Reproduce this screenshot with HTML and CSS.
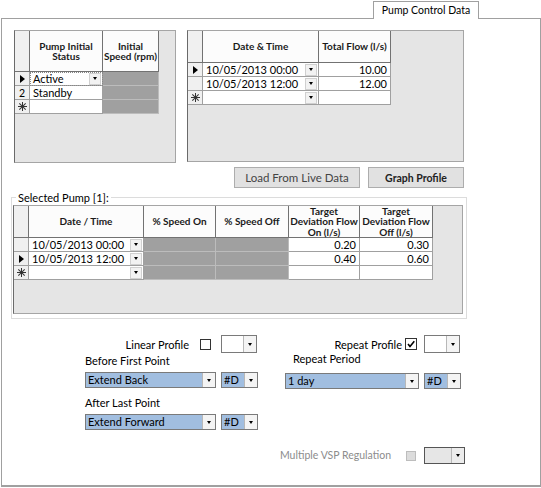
FILE: index.html
```html
<!DOCTYPE html>
<html>
<head>
<meta charset="utf-8">
<link rel="stylesheet" href="styles.css">
</head>
<body>
<div class="tabstrip"><div class="tab">Pump Control Data</div></div>
<div class="panel">
  <div class="toprow">
    <div class="dgv dgv1">
      <div class="tbl t1">
        <div class="hc rh"></div>
        <div class="hc">Pump Initial<br>Status</div>
        <div class="hc">Initial<br>Speed (rpm)</div>

        <div class="rc"><span class="cur"></span></div>
        <div class="c dd cur-cell"><span class="txt">Active</span><span class="dbtn small"><i></i></span></div>
        <div class="c dis"></div>

        <div class="rc num">2</div>
        <div class="c"><span class="txt">Standby</span></div>
        <div class="c dis"></div>

        <div class="rc"><span class="star"></span></div>
        <div class="c"></div>
        <div class="c dis"></div>
      </div>
    </div>
    <div class="dgv dgv2">
      <div class="tbl t2">
        <div class="hc rh"></div>
        <div class="hc">Date &amp; Time</div>
        <div class="hc">Total Flow (l/s)</div>

        <div class="rc"><span class="cur"></span></div>
        <div class="c dd"><span class="txt">10/05/2013 00:00</span><span class="dbtn"><i></i></span></div>
        <div class="c num-r">10.00</div>

        <div class="rc"></div>
        <div class="c dd"><span class="txt">10/05/2013 12:00</span><span class="dbtn"><i></i></span></div>
        <div class="c num-r">12.00</div>

        <div class="rc"><span class="star"></span></div>
        <div class="c dd"><span class="txt"></span><span class="dbtn"><i></i></span></div>
        <div class="c"></div>
      </div>
    </div>
  </div>

  <div class="btnrow">
    <button class="btn btn-load">Load From Live Data</button>
    <button class="btn btn-graph">Graph Profile</button>
  </div>

  <fieldset class="group">
    <legend>Selected Pump [1]:</legend>
    <div class="dgv dgv3">
      <div class="tbl t3">
        <div class="hc rh"></div>
        <div class="hc">Date / Time</div>
        <div class="hc">% Speed On</div>
        <div class="hc">% Speed Off</div>
        <div class="hc">Target<br>Deviation Flow<br>On (l/s)</div>
        <div class="hc">Target<br>Deviation Flow<br>Off (l/s)</div>

        <div class="rc"></div>
        <div class="c dd"><span class="txt">10/05/2013 00:00</span><span class="dbtn"><i></i></span></div>
        <div class="c dis"></div>
        <div class="c dis"></div>
        <div class="c num-r">0.20</div>
        <div class="c num-r">0.30</div>

        <div class="rc"><span class="cur"></span></div>
        <div class="c dd"><span class="txt">10/05/2013 12:00</span><span class="dbtn"><i></i></span></div>
        <div class="c dis"></div>
        <div class="c dis"></div>
        <div class="c num-r">0.40</div>
        <div class="c num-r">0.60</div>

        <div class="rc"><span class="star"></span></div>
        <div class="c dd"><span class="txt"></span><span class="dbtn"><i></i></span></div>
        <div class="c dis"></div>
        <div class="c dis"></div>
        <div class="c"></div>
        <div class="c"></div>
      </div>
    </div>
  </fieldset>

  <div class="opts">
    <div class="col col-left">
      <div class="line1">
        <span class="lbl">Linear Profile</span>
        <span class="chk chk-l"></span>
        <span class="combo small-combo"><span class="ctext"></span><span class="cbtn"><i></i></span></span>
      </div>
      <div class="cap cap1">Before First Point</div>
      <div class="comborow">
        <span class="combo blue wide"><span class="ctext">Extend Back</span><span class="cbtn"><i></i></span></span>
        <span class="combo blue narrow"><span class="ctext">#D</span><span class="cbtn"><i></i></span></span>
      </div>
      <div class="cap cap2">After Last Point</div>
      <div class="comborow">
        <span class="combo blue wide"><span class="ctext">Extend Forward</span><span class="cbtn"><i></i></span></span>
        <span class="combo blue narrow"><span class="ctext">#D</span><span class="cbtn"><i></i></span></span>
      </div>
    </div>
    <div class="col col-right">
      <div class="line1">
        <span class="lbl">Repeat Profile</span>
        <span class="chk chk-r checked"><svg viewBox="0 0 10 10" width="10" height="10"><path d="M2 5 L4 7.5 L8.3 2.3" fill="none" stroke="#000" stroke-width="1.6"/></svg></span>
        <span class="combo small-combo"><span class="ctext"></span><span class="cbtn"><i></i></span></span>
      </div>
      <div class="cap cap3">Repeat Period</div>
      <div class="comborow">
        <span class="combo blue wide2"><span class="ctext">1 day</span><span class="cbtn"><i></i></span></span>
        <span class="combo blue narrow"><span class="ctext">#D</span><span class="cbtn"><i></i></span></span>
      </div>
      <div class="line-vsp">
        <span class="lbl disabled">Multiple VSP Regulation</span>
        <span class="chk chk-d"></span>
        <span class="combo dis-combo"><span class="ctext"></span><span class="cbtn"><i></i></span></span>
      </div>
    </div>
  </div>
</div>
</body>
</html>
```

FILE: styles.css
```css
* { box-sizing: border-box; }
html, body { margin: 0; padding: 0; background: #fff; }
body {
  font-family: Lato, "Noto Sans", sans-serif;
  font-size: 11px;
  color: #000;
  width: 541px;
  height: 488px;
  overflow: hidden;
}

/* tab strip */
.tabstrip {
  display: flex;
  padding-left: 373px;
  height: 18px;
  padding-top: 1px;
}
.tab {
  position: relative;
  z-index: 2;
  width: 106px;
  height: 18px;
  border: 1px solid #a0a0a0;
  border-bottom: none;
  background: #fff;
  text-align: center;
  font-size: 10.5px;
  line-height: 16px;
  white-space: nowrap;
}

.panel {
  margin-left: 1px;
  width: 540px;
  height: 469px;
  border: 1px solid #a0a0a0;
  border-bottom: 2px solid #a0a0a0;
  padding: 11px 0 0 9px;
}

.toprow {
  display: flex;
  gap: 11px;
  margin-left: 3px;
  align-items: flex-start;
}

/* grids */
.dgv {
  background: #e5e5e5;
  border: 1px solid #a5a5a5;
  border-left-color: #6a6a6a;
  overflow: hidden;
}
.dgv1 { width: 162px; height: 133px; }
.dgv2 { width: 277px; height: 132px; }
.tbl { display: grid; width: max-content; }
.t1 { grid-template-columns: 15px 73px 56px; grid-template-rows: 41px 14px 14px 14px; }
.t2 { grid-template-columns: 15px 116px 72px; grid-template-rows: 32px 14px 14px 14px; }
.t3 { grid-template-columns: 15px 115px 72px 73px 71px 73px; grid-template-rows: 32px 14px 14px 14px; }

.hc {
  background: #fcfcfc;
  border-right: 1px solid #727272;
  border-bottom: 1px solid #727272;
  font-weight: bold;
  font-size: 10px;
  line-height: 10.5px;
  display: flex;
  align-items: center;
  justify-content: center;
  text-align: center;
  color: #1a1a1a;
  white-space: nowrap;
}
.hc.rh { background: #f0f0f0; }

.rc {
  background: #f0f0f0;
  border-right: 1px solid #a0a0a0;
  border-bottom: 1px solid #a0a0a0;
  display: flex;
  align-items: center;
  justify-content: center;
  font-size: 10.5px;
  line-height: 12px;
}
.cur {
  width: 0; height: 0;
  border-top: 4px solid transparent;
  border-bottom: 4px solid transparent;
  border-left: 5px solid #000;
  margin-left: 1px;
}
.star {
  width: 9px; height: 9px;
  background:
    linear-gradient(#333,#333) center/1px 9px no-repeat,
    linear-gradient(#333,#333) center/9px 1px no-repeat;
  position: relative;
}
.star::before, .star::after {
  content: "";
  position: absolute;
  left: 4px; top: 0;
  width: 1px; height: 9px;
  background: #333;
  transform: rotate(45deg);
}
.star::after { transform: rotate(-45deg); }

.c {
  background: #fff;
  border-right: 1px solid #a0a0a0;
  border-bottom: 1px solid #a0a0a0;
  font-size: 11px;
  line-height: 13px;
  padding-left: 3px;
  display: flex;
  align-items: center;
  overflow: hidden;
  white-space: nowrap;
}
.c.dis { background: #a0a0a0; border-color: #bcbcbc; }
.c.num-r { justify-content: flex-end; padding-right: 3px; }
.c.dd .txt { flex: 1; }
.dbtn {
  width: 12px;
  height: 12px;
  margin-right: 1px;
  background: #f2f2f2;
  border: 1px solid #d0d0d0;
  display: flex;
  align-items: center;
  justify-content: center;
}
.dbtn i, .cbtn i {
  display: block;
  width: 0; height: 0;
  border-left: 2.5px solid transparent;
  border-right: 2.5px solid transparent;
  border-top: 3px solid #000;
}
.cur-cell { outline: 1px dotted #888; outline-offset: -1px; }

/* buttons */
.btnrow {
  display: flex;
  justify-content: flex-end;
  gap: 8px;
  width: 453px;
  margin-top: 4px;
}
.btn {
  height: 21px;
  border: 1px solid #adadad;
  background: #e1e1e1;
  font-family: Lato, "Noto Sans", sans-serif;
  padding: 0;
  color: #333;
  white-space: nowrap;
}
.btn-load { width: 126px; font-size: 11.5px; color: #444; }
.btn-graph { width: 96px; font-size: 10.5px; font-weight: bold; color: #222; }

/* group box */
.group {
  margin: 3px 0 0 0;
  padding: 0 0 4px 1px;
  width: 456px;
  border: 1px solid #dcdcdc;
  min-width: 0;
}
.group legend {
  margin-left: 3px;
  padding: 0 2px;
  font-size: 11px;
  line-height: 13px;
}
.dgv3 { width: 450px; height: 109px; margin-top: 1px; }

/* options */
.opts {
  display: flex;
  margin-left: 74px;
  margin-top: 16px;
}
.col { display: flex; flex-direction: column; }
.col-left { width: 172px; }
.col-right { width: 178px; margin-left: 28px; }

.line1, .line-vsp {
  display: flex;
  align-items: center;
  justify-content: flex-end;
  height: 18px;
}
.lbl { font-size: 11px; line-height: 13px; white-space: nowrap; }
.lbl.disabled { color: #8c8c8c; font-size: 10.5px; }
.chk {
  width: 11px; height: 11px;
  border: 1px solid #333;
  background: #fff;
  display: inline-flex;
  align-items: center;
  justify-content: center;
  flex: none;
}
.chk-l { margin-left: 11px; margin-right: 10px; }
.chk-r { margin-left: 3px; margin-right: 7px; width: 12px; height: 12px; }
.chk-d { margin-left: 15px; margin-right: 8px; width: 10px; height: 10px; background: #dcdcdc; border-color: #bdbdbd; }
.col-right .line1 { padding-right: 3px; }

.combo {
  display: inline-flex;
  align-items: stretch;
  height: 16px;
  border: 1px solid #7a7a7a;
  background: #fff;
  font-size: 11px;
  line-height: 14px;
  flex: none;
}
.small-combo { width: 36px; height: 18px; }
.ctext { flex: 1; padding-left: 2px; white-space: nowrap; overflow: hidden; }
.cbtn {
  width: 13px;
  background: #f4f4f4;
  border-left: 1px solid #b8b8b8;
  display: flex;
  align-items: center;
  justify-content: center;
}
.combo.blue { background: #a1bee0; }
.combo.blue .cbtn { background: #f4f4f4; }
.wide { width: 131px; }
.wide2 { width: 134px; }
.narrow { width: 37px; margin-left: 5px; }
.comborow { display: flex; margin-top: 5px; }
.cap { font-size: 11px; line-height: 13px; white-space: nowrap; }
.cap1 { margin-top: 1px; }
.cap2 { margin-top: 8px; }
.cap3 { margin-top: -1px; margin-left: 8px; }
.col-right .comborow { margin-top: 8px; }
.line-vsp { margin-top: 58px; height: 17px; margin-right: -2px; }
.dis-combo { width: 41px; height: 17px; background: #e6e6e6; border-color: #555; }
.dis-combo .cbtn { background: #ececec; }
```
